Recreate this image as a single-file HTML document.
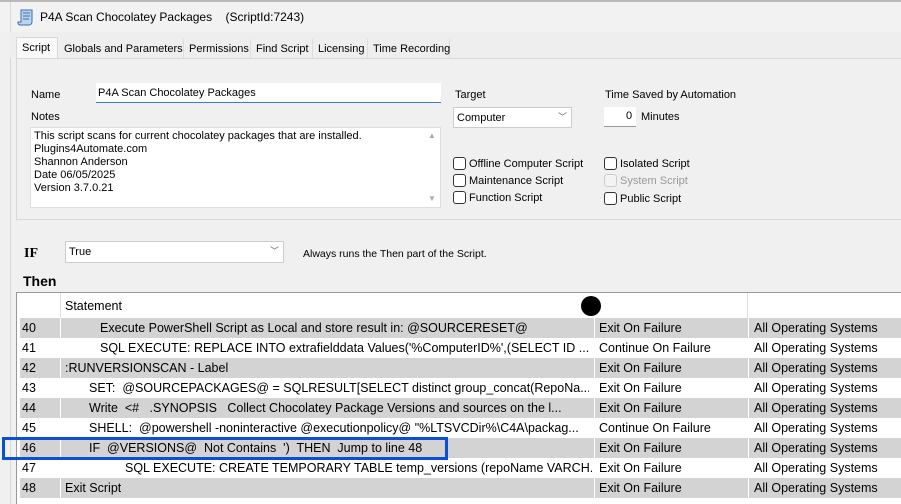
<!DOCTYPE html>
<html><head><style>
*{margin:0;padding:0;box-sizing:border-box}
body{width:901px;height:504px;overflow:hidden;background:#f0f0f0;font-family:"Liberation Sans",sans-serif;font-size:11px;color:#000;position:relative}
.a{position:absolute;white-space:nowrap}
.cb{position:absolute;width:13px;height:13px;border:1px solid #333;border-radius:3px;background:#fff}
.row{position:absolute;left:20px;width:881px;height:20px;font-size:12.5px;line-height:20px}
.row span{position:absolute;white-space:nowrap;overflow:hidden}
.g{background:#d3d3d3}
.w{background:#fff}
</style></head><body>
<div class="a" style="left:0;top:0;width:901px;height:2px;background:#bdb8b8"></div>
<div class="a" style="left:0;top:2px;width:901px;height:30px;background:#f2f2f2"></div>
<div class="a" style="left:10px;top:2px;width:1px;height:502px;background:#d8d8d8"></div>
<svg class="a" style="left:17px;top:8px" width="17" height="18" viewBox="0 0 17 18"><path d="M4 2h11v12c0 2-2 3-3 3H3c-1 0-2-1-2-2v-1h3z" fill="#bcd3ee" stroke="#3a6fb0"/><path d="M6 5h7M6 8h7M6 11h6" stroke="#3a6fb0"/></svg>
<div class="a" style="left:40px;top:10px;font-size:12px">P4A Scan Chocolatey Packages&nbsp;&nbsp;&nbsp;&nbsp;(ScriptId:7243)</div>
<div class="a" style="left:10px;top:32px;width:891px;height:26px;background:#eeeeee"></div>
<div class="a" style="left:16px;top:37px;width:42px;height:22px;background:#f9f9f9;border:1px solid #d8d8d8;border-bottom:none"></div>
<div class="a" style="left:22px;top:42px">Script</div>
<div class="a" style="left:60px;top:39px;width:390px;height:19px;border-right:1px solid #ddd"></div>
<div class="a" style="left:64px;top:43px">Globals and Parameters</div>
<div class="a" style="left:183px;top:39px;height:19px;border-left:1px solid #ddd"></div>
<div class="a" style="left:189px;top:43px">Permissions</div>
<div class="a" style="left:250px;top:39px;height:19px;border-left:1px solid #ddd"></div>
<div class="a" style="left:256px;top:43px">Find Script</div>
<div class="a" style="left:312px;top:39px;height:19px;border-left:1px solid #ddd"></div>
<div class="a" style="left:318px;top:43px">Licensing</div>
<div class="a" style="left:367px;top:39px;height:19px;border-left:1px solid #ddd"></div>
<div class="a" style="left:373px;top:43px">Time Recording</div>
<div class="a" style="left:16px;top:58px;width:890px;height:162px;background:#f0f0f0;border:1px solid #d8d8d8"></div>
<div class="a" style="left:31px;top:89px">Name</div>
<div class="a" style="left:96px;top:83px;width:345px;height:20px;background:#fff;border-bottom:1px solid #3a7bd5"></div>
<div class="a" style="left:98px;top:87px">P4A Scan Chocolatey Packages</div>
<div class="a" style="left:31px;top:111px">Notes</div>
<div class="a" style="left:30px;top:127px;width:411px;height:81px;background:#fff;border:1px solid #ddd"></div>
<div class="a" style="left:34px;top:130px;line-height:13px">This script scans for current chocolatey packages that are installed.<br>Plugins4Automate.com<br>Shannon Anderson<br>Date 06/05/2025<br>Version 3.7.0.21</div>
<div class="a" style="left:428px;top:131px;color:#aaa;font-size:8px">▲</div>
<div class="a" style="left:428px;top:194px;color:#aaa;font-size:8px">▼</div>
<div class="a" style="left:455px;top:89px">Target</div>
<div class="a" style="left:453px;top:107px;width:119px;height:21px;background:#fff;border:1px solid #ccc"></div>
<div class="a" style="left:457px;top:112px">Computer</div>
<div class="a" style="left:558px;top:110px;color:#666;font-size:9px">﹀</div>
<div class="a" style="left:605px;top:89px">Time Saved by Automation</div>
<div class="a" style="left:604px;top:107px;width:32px;height:20px;background:#fff;border-bottom:1px solid #999"></div>
<div class="a" style="left:626px;top:110px">0</div>
<div class="a" style="left:641px;top:111px">Minutes</div>
<div class="cb" style="left:453px;top:157px"></div><div class="a" style="left:469px;top:158px">Offline Computer Script</div>
<div class="cb" style="left:453px;top:174px"></div><div class="a" style="left:469px;top:175px">Maintenance Script</div>
<div class="cb" style="left:453px;top:191px"></div><div class="a" style="left:469px;top:192px">Function Script</div>
<div class="cb" style="left:604px;top:157px"></div><div class="a" style="left:620px;top:158px">Isolated Script</div>
<div class="cb" style="left:604px;top:174px;border-color:#ccc;background:#f3f3f3"></div><div class="a" style="left:620px;top:175px;color:#999">System Script</div>
<div class="cb" style="left:604px;top:192px"></div><div class="a" style="left:620px;top:193px">Public Script</div>
<div class="a" style="left:24px;top:246px;font-family:'Liberation Serif',serif;font-weight:bold;font-size:14px">IF</div>
<div class="a" style="left:65px;top:241px;width:219px;height:22px;background:#fff;border:1px solid #ccc"></div>
<div class="a" style="left:69px;top:246px;font-size:11px">True</div>
<div class="a" style="left:270px;top:244px;color:#666;font-size:9px">﹀</div>
<div class="a" style="left:303px;top:248px;font-size:10.5px">Always runs the Then part of the Script.</div>
<div class="a" style="left:23px;top:273px;font-weight:bold;font-size:14px">Then</div>
<div class="a" style="left:16px;top:292px;width:890px;height:212px;background:#fff;border-top:1px solid #999;border-left:1px solid #999"></div>
<div class="a" style="left:60px;top:293px;width:1px;height:25px;background:#e0e0e0"></div>
<div class="a" style="left:747px;top:293px;width:1px;height:25px;background:#e0e0e0"></div>
<div class="a" style="left:65px;top:299px;font-size:12.5px">Statement</div>
<div class="a" style="left:581px;top:296px;width:20px;height:20px;border-radius:50%;background:#000"></div>
<div class="row g" style="top:318px"><span style="left:2px">40</span><span style="left:80px">Execute PowerShell Script as Local and store result in: @SOURCERESET@</span><span style="left:579px">Exit On Failure</span><span style="left:734px">All Operating Systems</span></div>
<div class="row w" style="top:338px"><span style="left:2px">41</span><span style="left:80px">SQL EXECUTE: REPLACE INTO extrafielddata Values('%ComputerID%',(SELECT ID ...</span><span style="left:579px">Continue On Failure</span><span style="left:734px">All Operating Systems</span></div>
<div class="row g" style="top:358px"><span style="left:2px">42</span><span style="left:45px">:RUNVERSIONSCAN - Label</span><span style="left:579px">Exit On Failure</span><span style="left:734px">All Operating Systems</span></div>
<div class="row w" style="top:378px"><span style="left:2px">43</span><span style="left:69px;width:500px">SET:&nbsp; @SOURCEPACKAGES@ = SQLRESULT[SELECT distinct group_concat(RepoNa...</span><span style="left:579px">Exit On Failure</span><span style="left:734px">All Operating Systems</span></div>
<div class="row g" style="top:398px"><span style="left:2px">44</span><span style="left:69px;width:503px">Write&nbsp; &lt;#&nbsp;&nbsp; .SYNOPSIS&nbsp;&nbsp; Collect Chocolatey Package Versions and sources on the l...</span><span style="left:579px">Exit On Failure</span><span style="left:734px">All Operating Systems</span></div>
<div class="row w" style="top:418px"><span style="left:2px">45</span><span style="left:69px;width:503px">SHELL:&nbsp; @powershell -noninteractive @executionpolicy@ "%LTSVCDir%\C4A\packag...</span><span style="left:579px">Continue On Failure</span><span style="left:734px">All Operating Systems</span></div>
<div class="row g" style="top:438px"><span style="left:2px">46</span><span style="left:69px">IF&nbsp; @VERSIONS@&nbsp; Not Contains&nbsp; ')&nbsp; THEN&nbsp; Jump to line 48</span><span style="left:579px">Exit On Failure</span><span style="left:734px">All Operating Systems</span></div>
<div class="row w" style="top:458px"><span style="left:2px">47</span><span style="left:105px;width:467px">SQL EXECUTE: CREATE TEMPORARY TABLE temp_versions (repoName VARCH...</span><span style="left:579px">Exit On Failure</span><span style="left:734px">All Operating Systems</span></div>
<div class="row g" style="top:478px"><span style="left:2px">48</span><span style="left:45px">Exit Script</span><span style="left:579px">Exit On Failure</span><span style="left:734px">All Operating Systems</span></div>
<div class="a" style="left:60px;top:318px;width:1px;height:180px;background:#fff"></div>
<div class="a" style="left:594px;top:318px;width:1px;height:180px;background:#fff"></div>
<div class="a" style="left:748px;top:318px;width:1px;height:180px;background:#fff"></div>
<div class="a" style="left:2px;top:437px;width:446px;height:23px;border:3px solid #0b50d4"></div>
</body></html>
